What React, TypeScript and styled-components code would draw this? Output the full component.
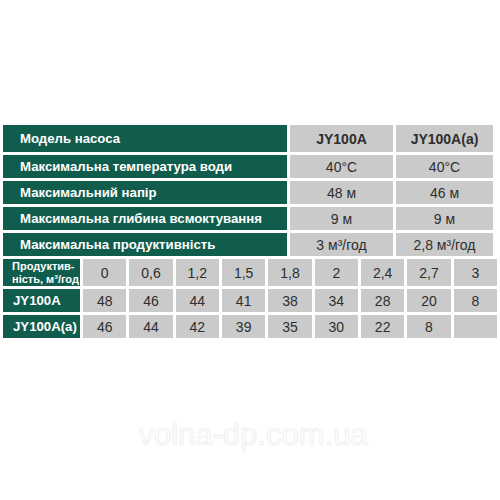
import React from 'react';
import styled, { createGlobalStyle } from 'styled-components';

const GlobalStyle = createGlobalStyle`
  html, body {
    margin: 0;
    padding: 0;
    background: #ffffff;
  }
  body {
    font-family: "Liberation Sans", Arial, sans-serif;
  }
`;

const GREEN = '#115d4d';
const GRAY = '#cacaca';
const INK = '#2e2e2e';

const Page = styled.div`
  width: 500px;
  height: 500px;
  box-sizing: border-box;
  padding: 125px 0 0 3px;
  display: flex;
  flex-direction: column;
  gap: 3px;
  overflow: hidden;
`;

const SpecTable = styled.div`
  width: 490px;
  display: grid;
  grid-template-columns: 284px 103px 97px;
  grid-template-rows: 27px repeat(4, 23px);
  column-gap: 3px;
  row-gap: 3px;
`;

const FlowTable = styled.div`
  width: 494px;
  display: grid;
  grid-template-columns: 77px repeat(9, 1fr);
  grid-template-rows: 27px 23px 23px;
  column-gap: 3px;
  row-gap: 3px;
`;

const LabelCell = styled.div<{ $small?: boolean; $inset?: number }>`
  background: ${GREEN};
  color: #ffffff;
  font-weight: bold;
  font-size: ${({ $small }) => ($small ? '11px' : '13.2px')};
  line-height: ${({ $small }) => ($small ? '13px' : '1')};
  display: flex;
  align-items: center;
  padding-left: ${({ $inset = 17 }) => $inset}px;
  white-space: nowrap;
`;

const ValueCell = styled.div<{ $bold?: boolean }>`
  background: ${GRAY};
  color: ${INK};
  font-size: 14px;
  font-weight: ${({ $bold }) => ($bold ? 'bold' : 'normal')};
  display: flex;
  align-items: center;
  justify-content: center;
  white-space: nowrap;
`;

const Watermark = styled.div`
  margin-top: 78px;
  width: 500px;
  text-align: center;
  font-family: "Liberation Sans", Arial, sans-serif;
  font-size: 31px;
  line-height: 1;
  color: #fefefe;
  -webkit-text-stroke: 0.7px #ebebeb;
`;

const specs: [string, string, string, boolean?][] = [
  ['Модель насоса', 'JY100A', 'JY100A(a)', true],
  ['Максимальна температура води', '40°C', '40°C'],
  ['Максимальний напір', '48 м', '46 м'],
  ['Максимальна глибина всмоктування', '9 м', '9 м'],
  ['Максимальна продуктивність', '3 м³/год', '2,8 м³/год'],
];

const flow = ['0', '0,6', '1,2', '1,5', '1,8', '2', '2,4', '2,7', '3'];
const headA = ['48', '46', '44', '41', '38', '34', '28', '20', '8'];
const headAa = ['46', '44', '42', '39', '35', '30', '22', '8', ''];

export default function App() {
  return (
    <>
      <GlobalStyle />
      <Page>
        <SpecTable>
          {specs.map(([label, a, b, bold]) => (
            <React.Fragment key={label}>
              <LabelCell>{label}</LabelCell>
              <ValueCell $bold={bold}>{a}</ValueCell>
              <ValueCell $bold={bold}>{b}</ValueCell>
            </React.Fragment>
          ))}
        </SpecTable>

        <FlowTable>
          <LabelCell $small $inset={9}>
            Продуктив-
            <br />
            ність, м³/год
          </LabelCell>
          {flow.map((v, i) => (
            <ValueCell key={'f' + i}>{v}</ValueCell>
          ))}
          <LabelCell $inset={10}>JY100A</LabelCell>
          {headA.map((v, i) => (
            <ValueCell key={'a' + i}>{v}</ValueCell>
          ))}
          <LabelCell $inset={10}>JY100A(a)</LabelCell>
          {headAa.map((v, i) => (
            <ValueCell key={'b' + i}>{v}</ValueCell>
          ))}
        </FlowTable>

        <Watermark>volna-dp.com.ua</Watermark>
      </Page>
    </>
  );
}
